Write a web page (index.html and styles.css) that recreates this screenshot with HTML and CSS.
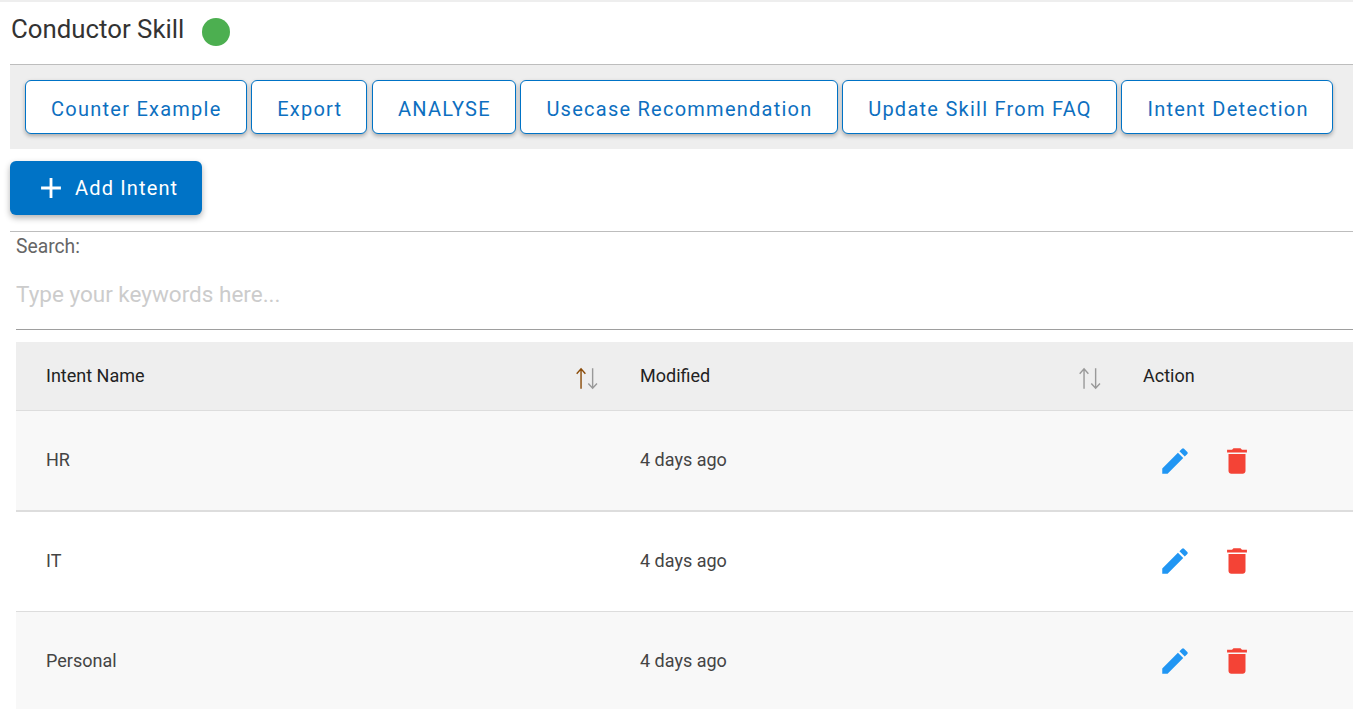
FILE: index.html
```html
<!DOCTYPE html>
<html lang="en">
<head>
<meta charset="utf-8">
<title>Conductor Skill</title>
<link rel="stylesheet" href="styles.css">
</head>
<body>
<header class="title-bar">
  <h1 class="title">Conductor Skill</h1>
  <span class="status-dot"></span>
</header>
<div class="toolbar">
  <button class="btn-outline">Counter Example</button>
  <button class="btn-outline">Export</button>
  <button class="btn-outline">ANALYSE</button>
  <button class="btn-outline">Usecase Recommendation</button>
  <button class="btn-outline">Update Skill From FAQ</button>
  <button class="btn-outline">Intent Detection</button>
</div>
<div class="add-row">
  <button class="btn-primary">
    <svg class="plus" viewBox="0 0 24 24"><path d="M19 13h-6v6h-2v-6H5v-2h6V5h2v6h6v2z"/></svg>
    Add Intent
  </button>
</div>
<section class="search">
  <label class="search-label" for="q">Search:</label>
  <input class="search-input" id="q" placeholder="Type your keywords here...">
</section>
<div class="table">
  <div class="row head">
    <div class="cell sort-cell"><span>Intent Name</span>
      <svg class="sort" viewBox="0 0 24 24"><path class="up active" d="M6.5 22V3.500M2.500 8l4-4.500 4 4.500"/><path class="down" d="M17.200 3v18.500M13.200 17l4 4.500 4-4.500"/></svg>
    </div>
    <div class="cell sort-cell"><span>Modified</span>
      <svg class="sort" viewBox="0 0 24 24"><path class="up" d="M6.5 22V3.500M2.500 8l4-4.500 4 4.500"/><path class="down" d="M17.200 3v18.500M13.200 17l4 4.500 4-4.500"/></svg>
    </div>
    <div class="cell">Action</div>
  </div>
  <div class="row odd first">
    <div class="cell name">HR</div>
    <div class="cell date">4 days ago</div>
    <div class="cell actions">
      <svg class="icon edit" viewBox="0 0 24 24"><path d="M3 17.25V21h3.75L17.81 9.94l-3.75-3.75L3 17.25zM20.71 7.04a1 1 0 0 0 0-1.41l-2.34-2.34a1 1 0 0 0-1.41 0l-1.83 1.83 3.75 3.75 1.83-1.83z"/></svg>
      <svg class="icon trash" viewBox="0 0 24 24"><path d="M6 19c0 1.1.9 2 2 2h8c1.1 0 2-.9 2-2V7H6v12zM19 4h-3.5l-1-1h-5l-1 1H5v2h14V4z"/></svg>
    </div>
  </div>
  <div class="row even">
    <div class="cell name">IT</div>
    <div class="cell date">4 days ago</div>
    <div class="cell actions">
      <svg class="icon edit" viewBox="0 0 24 24"><path d="M3 17.25V21h3.75L17.81 9.94l-3.75-3.75L3 17.25zM20.71 7.04a1 1 0 0 0 0-1.41l-2.34-2.34a1 1 0 0 0-1.41 0l-1.83 1.83 3.75 3.75 1.83-1.83z"/></svg>
      <svg class="icon trash" viewBox="0 0 24 24"><path d="M6 19c0 1.1.9 2 2 2h8c1.1 0 2-.9 2-2V7H6v12zM19 4h-3.5l-1-1h-5l-1 1H5v2h14V4z"/></svg>
    </div>
  </div>
  <div class="row odd last">
    <div class="cell name">Personal</div>
    <div class="cell date">4 days ago</div>
    <div class="cell actions">
      <svg class="icon edit" viewBox="0 0 24 24"><path d="M3 17.25V21h3.75L17.81 9.94l-3.75-3.75L3 17.25zM20.71 7.04a1 1 0 0 0 0-1.41l-2.34-2.34a1 1 0 0 0-1.41 0l-1.83 1.83 3.75 3.75 1.83-1.83z"/></svg>
      <svg class="icon trash" viewBox="0 0 24 24"><path d="M6 19c0 1.1.9 2 2 2h8c1.1 0 2-.9 2-2V7H6v12zM19 4h-3.5l-1-1h-5l-1 1H5v2h14V4z"/></svg>
    </div>
  </div>
</div>
</body>
</html>
```
FILE: styles.css
```css
html, body { margin: 0; padding: 0; height: 709px; overflow: hidden; background: #fff; }
body { font-family: Roboto, "Liberation Sans", sans-serif; color: #333; }
* { box-sizing: border-box; }

.title-bar {
  height: 64px;
  border-top: 2px solid #eee;
  padding: 12px 0 0 11px;
  display: flex;
  align-items: flex-start;
}
.title { margin: 0; font-size: 25.8px; font-weight: 400; line-height: 30px; color: #333; }
.status-dot { width: 28px; height: 28px; margin: 4px 0 0 18px; border-radius: 50%; background: #4caf50; }

.toolbar {
  margin-left: 10px;
  height: 85px;
  background: #eee;
  border-top: 1px solid #bdbdbd;
  padding: 15px 0 0 15px;
  display: flex;
  gap: 4.5px;
  align-items: flex-start;
}
.btn-outline {
  height: 54px;
  padding: 3px 24.1px 0 25px;
  background: #fff;
  border: 1px solid #0073c6;
  border-radius: 6px;
  color: #0d6fc0;
  font: 400 20px Roboto, sans-serif;
  letter-spacing: 1.25px;
  white-space: nowrap;
  box-shadow: 0 2px 4px rgba(0, 0, 0, .3);
}
.btn-outline:last-child { padding-right: 23.2px; }

.add-row { margin: 12px 0 0 10px; height: 71px; border-bottom: 1px solid #bdbdbd; }
.btn-primary {
  width: 192px;
  height: 54px;
  background: #0073c6;
  border: 0;
  border-radius: 6px;
  color: #fff;
  font: 450 20px Roboto, sans-serif;
  letter-spacing: 1.15px;
  display: flex;
  align-items: center;
  gap: 7px;
  padding: 0 0 0 24px;
  box-shadow: 0 3px 6px rgba(0, 0, 0, .3);
}
.plus { fill: #fff; width: 34px; height: 34px; flex: none; }

.search { margin-left: 16px; height: 98px; border-bottom: 1px solid #9e9e9e; display: flex; flex-direction: column; }
.search-label { font-size: 19.3px; line-height: 28px; margin-top: 1px; color: #666; }
.search-input {
  border: 0;
  outline: 0;
  padding: 0;
  margin-top: 15px;
  height: 36px;
  font: 400 22.5px Roboto, sans-serif;
  background: transparent;
}
.search-input::placeholder { color: #ccc; opacity: 1; }

.table { margin: 12px 0 0 16px; }
.row { display: grid; grid-template-columns: 594px 503px 1fr; align-items: center; }
.head { height: 69px; background: #eee; border-bottom: 1px solid #ddd; color: #222; padding-bottom: 2px; }
.odd { background: #f8f8f8; }
.even { background: #fff; }
.first { height: 101px; border-bottom: 2px solid #ddd; padding-bottom: 1px; }
.even { height: 100px; border-bottom: 1px solid #ddd; padding-bottom: 1px; }
.last { height: 98px; }
.cell { padding-left: 30px; font-size: 18px; }
.name, .date { color: #444; padding-bottom: 2px; }
.sort-cell { display: flex; align-items: center; justify-content: space-between; padding-right: 10.5px; }
.sort { fill: none; stroke: #999; stroke-width: 1.3; width: 26px; height: 26px; margin-top: 5px; }
.sort .active { stroke: #8a4b08; }
.actions { display: flex; align-items: center; gap: 28.5px; padding: 2px 0 0 44.5px; }
.even .actions, .last .actions { padding-top: 0; }
.icon { width: 34px; height: 34px; }
.edit { fill: #2196f3; }
.trash { fill: #f44336; }
```
